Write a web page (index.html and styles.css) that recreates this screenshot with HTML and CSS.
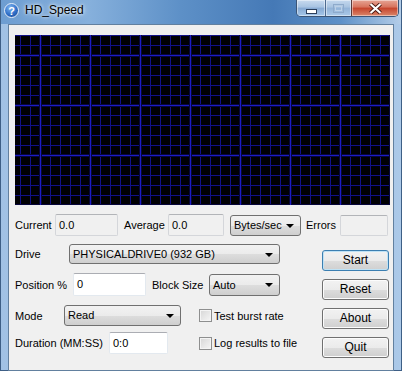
FILE: index.html
```html
<!DOCTYPE html>
<html lang="en">
<head>
    <meta charset="UTF-8">
    <title>HD_Speed</title>
    <link rel="stylesheet" href="styles.css">
</head>
<body>
    <div class="window">
        <div class="titlebar">
            <svg class="app-icon" width="15" height="15" viewBox="0 0 15 15">
                <defs>
                    <radialGradient id="helpGrad" cx="0.4" cy="0.3" r="0.8">
                        <stop offset="0" stop-color="#7fb4f0"/>
                        <stop offset="0.6" stop-color="#2f6fc8"/>
                        <stop offset="1" stop-color="#1b4a96"/>
                    </radialGradient>
                </defs>
                <circle cx="7.5" cy="7.5" r="7" fill="url(#helpGrad)" stroke="#e8f0fa" stroke-width="1"/>
                <text x="7.5" y="11.6" text-anchor="middle" class="help-q">?</text>
            </svg>
            <span class="title">HD_Speed</span>
            <div class="caption-btns">
                <div class="cap-btn cap-min">
                    <svg width="11" height="5" viewBox="0 0 11 5"><rect x="0.5" y="0.5" width="10" height="4" fill="#fff" stroke="#2b3f5c"/></svg>
                </div>
                <div class="cap-btn cap-max">
                    <svg width="11" height="9" viewBox="0 0 11 9"><rect x="0.5" y="0.5" width="10" height="8" fill="none" stroke="#8eaacb"/><rect x="2.5" y="2.5" width="6" height="4" fill="none" stroke="#bcd0e6"/></svg>
                </div>
                <div class="cap-btn cap-close">
                    <svg width="13" height="11" viewBox="0 0 13 11"><path d="M1.5 1 L11.5 10 M11.5 1 L1.5 10" stroke="#4a1a14" stroke-width="4"/><path d="M1.5 1 L11.5 10 M11.5 1 L1.5 10" stroke="#fff" stroke-width="2.2"/></svg>
                </div>
            </div>
        </div>

        <div class="client">
            <div class="graph"></div>

            <div class="stats-row">
                <span class="lbl lbl-current">Current</span>
                <div class="textbox readonly box-current">0.0</div>
                <span class="lbl lbl-average">Average</span>
                <div class="textbox readonly box-average">0.0</div>
                <div class="combo combo-units">Bytes/sec<span class="arrow"></span></div>
                <span class="lbl lbl-errors">Errors</span>
                <div class="textbox readonly box-errors"></div>
            </div>

            <div class="lower">
                <div class="form">
                    <div class="form-row row-drive">
                        <span class="lbl lbl-drive">Drive</span>
                        <div class="combo combo-drive">PHYSICALDRIVE0 (932 GB)<span class="arrow"></span></div>
                    </div>
                    <div class="form-row row-position">
                        <span class="lbl lbl-position">Position %</span>
                        <div class="textbox box-position">0</div>
                        <span class="lbl lbl-block">Block Size</span>
                        <div class="combo combo-block">Auto<span class="arrow"></span></div>
                    </div>
                    <div class="form-row row-mode">
                        <span class="lbl lbl-mode">Mode</span>
                        <div class="combo combo-mode">Read<span class="arrow"></span></div>
                        <span class="checkbox check-burst"></span>
                        <span class="lbl">Test burst rate</span>
                    </div>
                    <div class="form-row row-duration">
                        <span class="lbl lbl-duration">Duration (MM:SS)</span>
                        <div class="textbox box-duration">0:0</div>
                        <span class="checkbox check-log"></span>
                        <span class="lbl">Log results to file</span>
                    </div>
                </div>

                <div class="buttons">
                    <div class="btn btn-default">Start</div>
                    <div class="btn">Reset</div>
                    <div class="btn">About</div>
                    <div class="btn">Quit</div>
                </div>
            </div>
        </div>
    </div>
</body>
</html>
```

FILE: styles.css
```css
body {
    margin: 0;
    padding: 0;
    font-family: 'Liberation Sans', Arial, sans-serif;
    font-size: 11px;
    color: #000;
}

.window {
    width: 402px;
    height: 371px;
    box-sizing: border-box;
    padding: 0 7px 10px 7px;
    background:
        linear-gradient(to bottom, rgba(255,255,255,0) 0, rgba(255,255,255,0) 24px, rgba(170,200,232,0.85) 24px),
        linear-gradient(to right, #6d9dd1 0%, #86b0dc 22%, #5d90c7 45%, #4579b6 68%, #5e91c8 85%, #b4cde8 100%);
    border: 1px solid #3e5f86;
    border-top: none;
}

.titlebar {
    height: 24px;
    display: flex;
    align-items: flex-start;
    position: relative;
}

.app-icon {
    margin: 3px 0 0 -4px;
}

.help-q {
    font-family: 'Liberation Sans', Arial, sans-serif;
    font-size: 11px;
    font-weight: bold;
    fill: #fff;
}

.title {
    font-size: 12px;
    margin: 3px 0 0 6px;
    color: #000;
    text-shadow: 0 0 6px rgba(255,255,255,0.9), 0 0 3px rgba(255,255,255,0.9);
}

.caption-btns {
    position: absolute;
    top: 0;
    right: -5px;
    display: flex;
    height: 16px;
    border: 1px solid #3b5577;
    border-top: none;
    border-radius: 0 0 5px 5px;
    overflow: hidden;
}

.cap-btn {
    display: flex;
    align-items: center;
    justify-content: center;
    height: 16px;
    box-shadow: inset 0 0 0 1px rgba(255,255,255,0.45);
}

.cap-min {
    width: 28px;
    background: linear-gradient(to bottom, #c9dbef 0%, #a7c3e2 45%, #86a9d2 50%, #a5c7ea 100%);
    border-right: 1px solid #4d6a8f;
}

.cap-min svg {
    margin-top: 6px;
}

.cap-max {
    width: 25px;
    background: linear-gradient(to bottom, #c4d8ee 0%, #a8c3e0 45%, #92b3d8 50%, #aac9e8 100%);
    border-right: 1px solid #5a3a3a;
}

.cap-close {
    width: 46px;
    background: linear-gradient(to bottom, #e6a595 0%, #d7725c 45%, #c5432b 50%, #d9866b 100%);
}

.client {
    height: 335px;
    background: #f0f0f0;
    border: 1px solid #62809f;
    padding: 10px 0 0 6px;
}

.graph {
    width: 375px;
    height: 170px;
    background-color: #000003;
    background-image:
        linear-gradient(to right, #06063a 0 1px, #1c1cc4 1px 2px, #06063a 2px 3px, transparent 3px),
        linear-gradient(to bottom, #06063a 0 1px, #1c1cc4 1px 2px, #06063a 2px 3px, transparent 3px),
        linear-gradient(to right, #111188 0 1px, transparent 1px),
        linear-gradient(to bottom, #111188 0 1px, transparent 1px);
    background-size: 50px 100%, 100% 50px, 10px 100%, 100% 10px;
    background-position: 24px 0, 0 19px, 5px 0, 0 10px;
}

.lbl {
    white-space: nowrap;
}

.stats-row {
    display: flex;
    align-items: center;
    height: 22px;
    margin-top: 9px;
}

.lbl-current { width: 40px; }
.lbl-average { width: 44px; margin-left: 6px; }
.lbl-errors { width: 34px; margin-left: 5px; }

.textbox {
    box-sizing: border-box;
    height: 22px;
    line-height: 20px;
    padding-left: 3px;
    background: #fff;
    border: 1px solid #e3e9ef;
    border-top-color: #abadb3;
    border-radius: 2px;
}

.textbox.readonly {
    background: #f0f0f0;
    border-color: #d4d6da;
    border-top-color: #b2b4b8;
}

.box-current { width: 63px; }
.box-average { width: 56px; }
.box-errors { width: 48px; height: 21px; }

.combo {
    box-sizing: border-box;
    position: relative;
    height: 21px;
    line-height: 19px;
    padding-left: 3px;
    border: 1px solid #707070;
    border-radius: 3px;
    background: linear-gradient(to bottom, #f2f2f2 0%, #ebebeb 50%, #dddddd 51%, #cfcfcf 100%);
    white-space: nowrap;
}

.combo .arrow {
    position: absolute;
    right: 6px;
    top: 8px;
    width: 0;
    height: 0;
    border-left: 4px solid transparent;
    border-right: 4px solid transparent;
    border-top: 4px solid #000;
}

.combo-units { width: 71px; margin-left: 6px; }
.combo-drive { width: 211px; height: 20px; line-height: 18px; }
.combo-block { width: 71px; height: 22px; line-height: 20px; }
.combo-mode { width: 117px; }

.lower {
    display: flex;
    justify-content: space-between;
    width: 375px;
}

.form {
    display: flex;
    flex-direction: column;
    padding-top: 6px;
}

.form-row {
    display: flex;
    align-items: center;
}

.row-drive { height: 24px; }
.row-position { height: 25px; margin-top: 6px; }
.row-mode { height: 25px; margin-top: 6px; }
.row-duration { height: 22px; margin-top: 4px; }

.lbl-drive { width: 54px; }
.lbl-position { width: 58px; }
.lbl-block { width: 57px; margin-left: 6px; }
.lbl-mode { width: 49px; }
.lbl-duration { width: 94px; }

.box-position { width: 73px; height: 23px; line-height: 21px; }
.box-duration { width: 59px; }

.checkbox {
    box-sizing: border-box;
    width: 13px;
    height: 13px;
    margin-right: 2px;
    border: 1px solid #8e8f8f;
    background: linear-gradient(135deg, #d6d6d6 0%, #f6f6f6 100%);
    box-shadow: inset 0 0 0 1px #f4f4f4;
}

.check-burst { margin-left: 18px; }
.check-log { margin-left: 31px; }

.buttons {
    display: flex;
    flex-direction: column;
    gap: 8px;
    padding-top: 14px;
    margin-right: 1px;
}

.btn {
    box-sizing: border-box;
    width: 67px;
    height: 21px;
    line-height: 19px;
    text-align: center;
    font-size: 12px;
    border: 1px solid #707070;
    border-radius: 3px;
    background: linear-gradient(to bottom, #f2f2f2 0%, #ebebeb 50%, #dddddd 51%, #cfcfcf 100%);
    box-shadow: inset 0 0 0 1px #fcfcfc;
}

.btn-default {
    border-color: #3c7fb1;
    box-shadow: inset 0 0 0 1px #bfe2f5;
}
```
